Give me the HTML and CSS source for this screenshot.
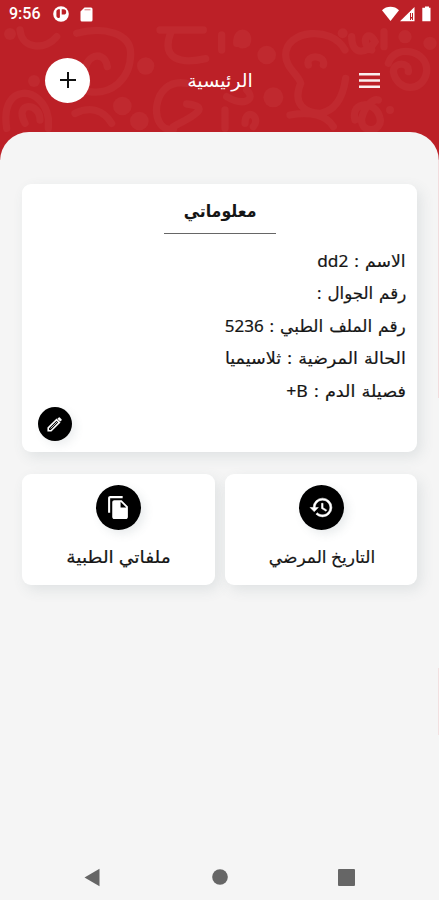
FILE: index.html
```html
<!DOCTYPE html>
<html lang="ar">
<head>
<meta charset="utf-8">
<title>الرئيسية</title>
<link rel="stylesheet" href="styles.css">
</head>
<body>
<div class="screen">
  <header class="header">
    <svg class="pattern" viewBox="0 -60 1317 480" width="439" height="160" aria-hidden="true">
      <path d="M60 30c5 60 80 60 110 20M230 40c80-22 162 0 162 60 0 80-60 125-125 115M262 190c-30-80 50-110 60-50M20 325c-22-140 110-130 125-30v30M75 310c-35-65 45-65 45-10M225 280c45-22 85-10 110 30M480 30h130M512 38c-30 80 30 95 105 78M560 190c-110-20-115 150-40 138M520 320c55-30 120-60 40-68M665 45v45M710 70c0-50 45-30 30 0-20 15-30-10-10-15M1035 90c-40-75-178-60-178 15 0 40 40 60 45 85-25 60 10 90 60 90 55-10 70-70 75-105M925 135c-10-35 55-30 45 0M680 230c50 30 90 10 60-20M675 270v55M735 310c0-50 50-20 25 10M1055 50c0 60 50 50 70 15-25-45-45 10-10 25M1152 35v45M1165 130c20-60 120-40 115 25-10 65-90 60-100 0 0-30 50-30 45 0M1065 300c-15-60 65-60 75-5 10 40-60 50-55 0 10-40 35-60 50-55M870 285c60-12 110 0 130 35"/>
      <g class="dots"><circle cx="437" cy="138" r="26"/><circle cx="367" cy="258" r="28"/><circle cx="418" cy="303" r="28"/><circle cx="800" cy="105" r="28"/><circle cx="820" cy="232" r="30"/><circle cx="1028" cy="40" r="15"/><circle cx="1215" cy="50" r="20"/><circle cx="1290" cy="70" r="20"/><circle cx="102" cy="183" r="18"/><circle cx="30" cy="42" r="18"/><circle cx="1170" cy="270" r="12"/></g>
    </svg>
    <div class="statusbar">
      <span class="clock">9:56</span>
      <svg class="st-app" width="16" height="16" viewBox="0 0 16 16"><circle cx="8" cy="8" r="7.8" fill="#fff"/><path d="M5 3.2h1.900v8.300a2.200 2.200 0 0 1-3.500-1.800V4.800zM8.700 3.200h1.800a2.700 2.700 0 0 1 0 5.400H8.700z" fill="#bc2027"/></svg>
      <svg class="st-sd" width="13" height="15" viewBox="0 0 13 15"><path d="M4.500.5H11a1.500 1.500 0 0 1 1.500 1.500v11a1.500 1.500 0 0 1-1.500 1.500H2A1.500 1.500 0 0 1 .5 13V4.500z" fill="#fff"/><path d="M4.500 2.800h6" stroke="#d77579"/></svg>
      <svg class="st-net" width="50" height="16" viewBox="0 0 50 16"><path d="M0 4.200C4.500-.4 12.500-.4 17 4.200L8.500 15z" fill="#fff"/><path d="M18 15.300 32.500 1v14.300z" fill="#fff"/><path d="M28 7h3v7h-3z" fill="#bc2027"/><path d="M29.500 7v4M29.500 12.500V14" stroke="#fff" stroke-width="1"/><path d="M43 .5h4v1.300h1.500V15.300h-8.200V1.800H43z" fill="#fff"/></svg>
    </div>
    <div class="toolbar">
      <span class="add"><svg width="16" height="16" viewBox="0 0 16 16"><path d="M8 0v16M0 8h16" stroke="#111" stroke-width="2"/></svg></span>
      <h1 class="heading" dir="rtl"><span>الرئيسية</span></h1>
      <svg class="menu" width="21" height="15" viewBox="0 0 21 15"><path d="M0 1.300h21M0 7.500h21M0 13.700h21" stroke="#fff" stroke-opacity=".93" stroke-width="2.500"/></svg>
    </div>
  </header>
  <main class="sheet">
    <section class="card info">
      <h2 class="card-title" dir="rtl"><span>معلوماتي</span></h2>
      <div class="rows" dir="rtl">
        <p><span class="r1">الاسم : dd2</span></p>
        <p><span class="r2">رقم الجوال :</span></p>
        <p><span class="r3">رقم الملف الطبي : 5236</span></p>
        <p><span class="r4">الحالة المرضية : ثلاسيميا</span></p>
        <p><span class="r5">فصيلة الدم : B+</span></p>
      </div>
      <span class="edit"><svg width="18" height="18" viewBox="0 0 24 24"><path d="M3 17.250V21h3.750L17.800 9.900l-3.700-3.700z" fill="none" stroke="#fff" stroke-width="2.200"/><path d="m6 18 9-9" stroke="#fff" stroke-width="1"/><path d="M20.700 7a1 1 0 0 0 0-1.400l-2.300-2.300a1 1 0 0 0-1.400 0l-1.800 1.800L18.900 8.800z" fill="#fff"/></svg></span>
    </section>
    <div class="tiles">
      <section class="card tile">
        <span class="disc"><svg width="25" height="27" viewBox="0 0 24 24" fill="#fff"><path d="M16 1H4C2.900 1 2 1.900 2 3v14h2V3h12z"/><path d="m15 5 6 6v10c0 1.100-.9 2-2 2H7.990C6.890 23 6 22.100 6 21l.01-14c0-1.100.89-2 1.990-2zm-1 7h5.500L14 6.500z"/></svg></span>
        <h3 class="label files" dir="rtl"><span>ملفاتي الطبية</span></h3>
      </section>
      <section class="card tile">
        <span class="disc"><svg width="25" height="25" viewBox="0 0 24 24" fill="#fff"><path stroke="#fff" stroke-width=".5" d="M13 3a9 9 0 0 0-9 9H1l3.890 3.890.07.14L9 12H6c0-3.870 3.130-7 7-7s7 3.130 7 7-3.130 7-7 7c-1.930 0-3.680-.79-4.940-2.060l-1.420 1.420A8.950 8.950 0 0 0 13 21a9 9 0 0 0 0-18zm-1 5v5l4.280 2.540.72-1.210-3.500-2.080V8z"/></svg></span>
        <h3 class="label history" dir="rtl"><span>التاريخ المرضي</span></h3>
      </section>
    </div>
  </main>
  <nav class="navbar">
    <svg width="17" height="19" viewBox="0 0 17 19"><path d="M.5 9.500 15.500.8v17.400z"/></svg>
    <svg width="16" height="16" viewBox="0 0 16 16"><circle cx="8" cy="8" r="7.800"/></svg>
    <svg width="17" height="17" viewBox="0 0 17 17"><rect width="17" height="17" rx="1"/></svg>
  </nav>
</div>
</body>
</html>
```
FILE: styles.css
```css
* { box-sizing: border-box; }
body { margin: 0; background: #f5f5f5; font-family: "Noto Sans", "DejaVu Sans", sans-serif; color: #151515; }
h1, h2, h3, p { margin: 0; font-weight: 400; }
svg { display: block; flex: none; }
.screen { width: 439px; height: 900px; display: flex; flex-direction: column; overflow: hidden; }
.header { position: relative; height: 160px; flex: none; background: #bc2027; }
.pattern { position: absolute; inset: 0; fill: none; stroke: #c0292f; stroke-width: 22; stroke-linecap: round; }
.dots { fill: #c0292f; stroke: none; }
.statusbar { position: relative; height: 28px; display: flex; align-items: center; padding: 0 10px 0 9px; }
.clock { width: 44px; font: 500 16px/28px Roboto, sans-serif; color: #fff; }
.st-sd { margin-left: 11px; }
.st-net { margin-left: auto; margin-right: -3px; }
.toolbar { position: relative; height: 104px; display: flex; align-items: center; padding: 0 59px 0 45px; justify-content: space-between; }
.add { width: 45px; height: 45px; border-radius: 50%; background: #fff; display: grid; place-items: center; }
.heading { font-size: 18px; color: #fff; line-height: 30px; }
.heading span { transform: translateX(-5px) scaleX(1.06); }
.sheet { position: relative; margin-top: -28px; flex: 1; padding: 52px 22px 0; background: linear-gradient(#f2dcdd, #f2dcdd) right 20px / 1px 246px no-repeat, linear-gradient(#f2e0e0, #f2e0e0) right 536px / 1px 67px no-repeat, #f5f5f5; background-position: right 0 top 20px, right 0 top 536px; border-radius: 29px 29px 0 0; }
.card { background: #fff; border-radius: 9px; box-shadow: 4px 5px 14px rgba(75, 95, 110, .12); }
.info { position: relative; height: 268px; width: 395px; padding-top: 11px; }
.card-title { width: 112px; height: 39px; margin: 0 auto; border-bottom: 1px solid #666; text-align: center; font-size: 17px; line-height: 32px; font-weight: 700; }
.card-title span { transform: translateX(1px) scaleX(.93); }
.rows { padding: 11px 11px 0; font-size: 16.5px; line-height: 32.4px; }
.rows span, .heading span, .label span, .card-title span { display: inline-block; white-space: nowrap; }
.rows span { transform-origin: right center; word-spacing: 1.5px; -webkit-text-stroke: .2px currentColor; }
.r1 { transform: scaleX(1.045); }
.r2 { transform: scaleX(1.01); }
.r3 { transform: scaleX(1.03); }
.r4 { transform: scaleX(1.065); }
.r5 { transform: scaleX(1.07); }
.rows p { height: 32.4px; }
.edit { position: absolute; left: 16px; bottom: 11px; width: 34px; height: 34px; border-radius: 50%; background: #000; display: grid; place-items: center; box-shadow: 4px 4px 9px rgba(75, 95, 110, .1); }
.tiles { display: grid; grid-template-columns: 193px 192px; gap: 10px; margin-top: 22px; }
.tile { height: 111px; padding-top: 11px; display: flex; flex-direction: column; align-items: center; }
.disc { width: 45px; height: 45px; border-radius: 50%; background: #000; display: grid; place-items: center; box-shadow: 4px 4px 10px rgba(75, 95, 110, .12); }
.label { margin-top: 11px; font-size: 17px; line-height: 32px; -webkit-text-stroke: .2px currentColor; }
.files span { transform: scaleX(1.1); }
.history span { transform: translateX(1px); }
.navbar { height: 46px; display: flex; align-items: center; justify-content: space-between; padding: 0 84px; flex: none; }
.navbar svg { fill: #666; }
```
